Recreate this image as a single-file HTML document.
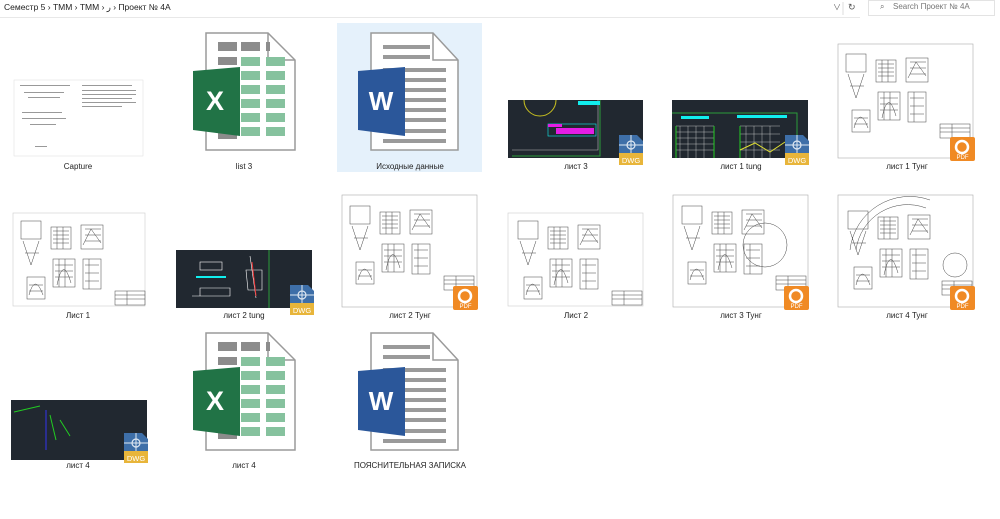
<!DOCTYPE html>
<html><head><meta charset="utf-8"><style>
html,body{margin:0;padding:0;background:#fff;width:1000px;height:519px;overflow:hidden;font-family:"Liberation Sans","Noto Sans CJK SC",sans-serif}
svg{position:absolute;left:0;top:0}
</style></head><body>
<svg width="1000" height="519" viewBox="0 0 1000 519" xmlns="http://www.w3.org/2000/svg" font-family="Liberation Sans, Noto Sans CJK SC, sans-serif">
<defs>
<g id="xl">
 <path d="M13,3 H75 L102,30 V120 H13 Z" fill="#fff" stroke="#9a9a9a" stroke-width="1.5"/>
 <path d="M75,3 V30 H102" fill="none" stroke="#9a9a9a" stroke-width="1.5"/>
 <rect x="25" y="12" width="19" height="9" fill="#8c8c8c"/><rect x="48" y="12" width="19" height="9" fill="#8c8c8c"/><rect x="73" y="12" width="4" height="9" fill="#8c8c8c"/>
 <rect x="25" y="27" width="19" height="8" fill="#8c8c8c"/>
 <g fill="#86c29e">
 <rect x="48" y="27" width="19" height="9"/><rect x="73" y="27" width="19" height="9"/>
 <rect x="48" y="41" width="19" height="9"/><rect x="73" y="41" width="19" height="9"/>
 <rect x="48" y="55" width="19" height="9"/><rect x="73" y="55" width="19" height="9"/>
 <rect x="48" y="69" width="19" height="9"/><rect x="73" y="69" width="19" height="9"/>
 <rect x="48" y="83" width="19" height="9"/><rect x="73" y="83" width="19" height="9"/>
 <rect x="48" y="97" width="19" height="9"/><rect x="73" y="97" width="19" height="9"/>
 </g>
 <rect x="25" y="100" width="19" height="9" fill="#8c8c8c"/>
 <path d="M0,41 L47,37 V106 L0,100 Z" fill="#217346"/>
 <text x="22" y="80" font-size="27" font-weight="bold" fill="#fff" text-anchor="middle">X</text>
</g>
<g id="wd">
 <path d="M13,3 H75 L100,30 V120 H13 Z" fill="#fff" stroke="#9a9a9a" stroke-width="1.5"/>
 <path d="M75,3 V30 H100" fill="none" stroke="#9a9a9a" stroke-width="1.5"/>
 <g fill="#9a9a9a">
 <rect x="25" y="15" width="47" height="4"/><rect x="25" y="25" width="47" height="4"/>
 <rect x="25" y="38" width="63" height="4"/><rect x="25" y="48" width="63" height="4"/><rect x="25" y="58" width="63" height="4"/>
 <rect x="25" y="68" width="63" height="4"/><rect x="25" y="78" width="63" height="4"/><rect x="25" y="88" width="63" height="4"/>
 <rect x="25" y="99" width="63" height="4"/><rect x="25" y="109" width="63" height="4"/>
 </g>
 <path d="M0,41 L47,37 V106 L0,100 Z" fill="#2b579a"/>
 <text x="23" y="80" font-size="26" font-weight="bold" fill="#fff" text-anchor="middle">W</text>
</g>
<g id="dwg">
 <path d="M0,0 H18 L24,6 V30 H0 Z" fill="#3e6fa8"/>
 <rect x="0" y="18" width="24" height="12" fill="#e8b53a"/>
 <circle cx="12" cy="10" r="4" fill="none" stroke="#dfe8f2" stroke-width="1.2"/>
 <path d="M0,10 H24 M12,0 V18" stroke="#dfe8f2" stroke-width="1"/>
 <text x="12" y="28" font-size="7.5" fill="#fff" text-anchor="middle">DWG</text>
</g>
<g id="pdf">
 <rect x="0" y="0" width="25" height="24" rx="2" fill="#f08a24"/>
 <circle cx="12" cy="10" r="6" fill="none" stroke="#fff" stroke-width="2.5"/>
 <text x="12.5" y="22" font-size="6" fill="#fff" text-anchor="middle">PDF</text>
</g>
<g id="draw" stroke="#444" stroke-width="0.5" fill="none">
 <rect x="6" y="6" width="20" height="18"/><path d="M8,26 L16,50 L24,26 M10,38 H24"/>
 <rect x="36" y="12" width="20" height="22"/><path d="M38,16 H54 M38,20 H54 M38,24 H54 M38,28 H54 M42,12 V34 M48,12 V34"/>
 <rect x="66" y="10" width="22" height="24"/><path d="M68,30 L76,14 L86,28 M70,14 H86 M70,20 H86 M70,26 H86"/>
 <rect x="38" y="44" width="22" height="28"/><path d="M40,50 H58 M40,56 H58 M40,62 H58 M44,44 V72 M50,44 V72 M42,70 Q48,40 56,68"/>
 <rect x="12" y="62" width="18" height="22"/><path d="M14,80 Q20,58 28,80 M14,70 H28 M14,76 H28"/>
 <rect x="68" y="44" width="18" height="30"/><path d="M70,50 H84 M70,58 H84 M70,66 H84 M74,44 V74"/>
 <rect x="100" y="76" width="30" height="14"/><path d="M100,80 H130 M100,84 H130 M112,76 V90"/>
</g>
</defs>

<rect x="0" y="0" width="1000" height="18" fill="#fff"/>
<line x1="0" y1="17.5" x2="860" y2="17.5" stroke="#e8e8e8"/>
<text x="4" y="10" font-size="8.5" fill="#222">Семестр 5  ›  ТММ  ›  ТММ  ›      ر  ›  Проект № 4А</text>
<text x="833" y="10" font-size="8" fill="#666">∨</text>
<line x1="843" y1="2" x2="843" y2="15" stroke="#ddd"/>
<text x="848" y="10" font-size="9" fill="#555">↻</text>
<rect x="868.5" y="0.5" width="126" height="15" fill="#fff" stroke="#e3e3e3"/>
<text x="880" y="9" font-size="8" fill="#666">⌕</text>
<text x="893" y="9" font-size="8" fill="#777">Search Проект № 4А</text>

<rect x="337" y="23" width="145" height="149" fill="#e5f1fb"/>

<rect x="14" y="80" width="129" height="76" fill="#fff" stroke="#ddd" stroke-width="0.5"/>
<g fill="#999"><rect x="20" y="85" width="50" height="1"/><rect x="24" y="92" width="40" height="1"/><rect x="28" y="97" width="32" height="1"/><rect x="22" y="112" width="40" height="1"/><rect x="22" y="118" width="44" height="1"/><rect x="30" y="124" width="26" height="1"/><rect x="35" y="146" width="12" height="1"/>
<rect x="82" y="85" width="50" height="1"/><rect x="82" y="90" width="54" height="1"/><rect x="82" y="94" width="54" height="1"/><rect x="82" y="98" width="50" height="1"/><rect x="82" y="102" width="54" height="1"/><rect x="82" y="106" width="40" height="1"/></g>
<text x="78" y="169" font-size="8" fill="#222" text-anchor="middle">Capture</text>

<use href="#xl" x="193" y="30"/>
<text x="244" y="169" font-size="8" fill="#222" text-anchor="middle">list 3</text>
<use href="#wd" x="358" y="30"/>
<text x="410" y="169" font-size="8" fill="#222" text-anchor="middle">Исходные данные</text>

<rect x="508" y="100" width="135" height="58" fill="#212830"/>
<path d="M512,156 H600 V100" stroke="#2a9d3a" fill="none"/><path d="M512,150 H598 V100" stroke="#bbb" fill="none" stroke-width="0.6"/>
<path d="M524,100 A16,16 0 0 0 556,100" stroke="#c8c020" fill="none"/><rect x="578" y="101" width="22" height="4" fill="#1ee"/>
<rect x="548" y="124" width="48" height="12" fill="none" stroke="#1ee" stroke-width="0.6"/><rect x="556" y="128" width="38" height="6" fill="#e41de4"/><rect x="548" y="124" width="14" height="3" fill="#e41de4"/>
<use href="#dwg" x="619" y="135"/>
<text x="576" y="169" font-size="8" fill="#222" text-anchor="middle">лист  3</text>

<rect x="672" y="100" width="136" height="58" fill="#212830"/>
<path d="M672,113 H797 V158" stroke="#2a9d3a" fill="none"/>
<rect x="681" y="116" width="28" height="3" fill="#1ee"/><rect x="737" y="115" width="50" height="3" fill="#1ee"/>
<g stroke="#ddd" stroke-width="0.4"><path d="M676,126 H714 M676,132 H714 M676,138 H714 M676,144 H714 M676,150 H714 M680,126 V158 M688,126 V158 M696,126 V158 M704,126 V158 M740,126 H780 M740,134 H780 M740,142 H780 M740,150 H780 M746,126 V158 M754,126 V158 M762,126 V158 M770,126 V158"/></g>
<path d="M676,126 V158 M714,126 V158 M740,126 V158" stroke="#2c2" />
<path d="M740,150 L755,143 L770,152 L785,142" stroke="#dd3" fill="none"/>
<use href="#dwg" x="785" y="135"/>
<text x="741" y="169" font-size="8" fill="#222" text-anchor="middle">лист 1 tung</text>

<rect x="838" y="44" width="135" height="114" fill="#fff" stroke="#aaa" stroke-width="0.6"/>
<use href="#draw" x="840" y="48"/>
<use href="#pdf" x="950" y="137"/>
<text x="907" y="169" font-size="8" fill="#222" text-anchor="middle">лист 1 Тунг</text>

<rect x="13" y="213" width="132" height="93" fill="#fff" stroke="#ccc" stroke-width="0.6"/>
<use href="#draw" x="15" y="215"/>
<text x="78" y="318" font-size="8" fill="#222" text-anchor="middle">Лист 1</text>

<rect x="176" y="250" width="136" height="58" fill="#212830"/>
<path d="M269,250 V308" stroke="#2a9d3a"/>
<rect x="200" y="262" width="22" height="8" fill="none" stroke="#fff" stroke-width="0.6"/><rect x="196" y="276" width="30" height="2" fill="#1ee"/>
<path d="M192,296 H230 V288 H200 V296" stroke="#fff" fill="none" stroke-width="0.6"/>
<path d="M250,256 L256,298 M246,270 H262 V290 H248 Z" stroke="#fff" fill="none" stroke-width="0.6"/><path d="M252,262 L256,296" stroke="#e33"/>
<use href="#dwg" x="290" y="285"/>
<text x="244" y="318" font-size="8" fill="#222" text-anchor="middle">лист 2 tung</text>

<rect x="342" y="195" width="135" height="112" fill="#fff" stroke="#aaa" stroke-width="0.6"/>
<use href="#draw" x="344" y="200"/>
<use href="#pdf" x="453" y="286"/>
<text x="410" y="318" font-size="8" fill="#222" text-anchor="middle">лист 2 Тунг</text>

<rect x="508" y="213" width="135" height="93" fill="#fff" stroke="#ccc" stroke-width="0.6"/>
<use href="#draw" x="512" y="215"/>
<text x="576" y="318" font-size="8" fill="#222" text-anchor="middle">Лист 2</text>

<rect x="673" y="195" width="135" height="112" fill="#fff" stroke="#aaa" stroke-width="0.6"/>
<use href="#draw" x="676" y="200"/>
<circle cx="765" cy="245" r="22" fill="none" stroke="#444" stroke-width="0.5"/>
<use href="#pdf" x="784" y="286"/>
<text x="741" y="318" font-size="8" fill="#222" text-anchor="middle">лист 3 Тунг</text>

<rect x="838" y="195" width="135" height="112" fill="#fff" stroke="#aaa" stroke-width="0.6"/>
<path d="M850,250 A60,60 0 0 1 930,200 M856,250 A52,52 0 0 1 926,208" stroke="#444" fill="none" stroke-width="0.5"/>
<use href="#draw" x="842" y="205"/>
<circle cx="955" cy="265" r="12" fill="none" stroke="#444" stroke-width="0.5"/>
<use href="#pdf" x="950" y="286"/>
<text x="907" y="318" font-size="8" fill="#222" text-anchor="middle">лист 4 Тунг</text>

<rect x="11" y="400" width="136" height="60" fill="#212830"/>
<path d="M14,412 L40,406" stroke="#2c2"/><path d="M50,415 L56,440 M60,420 L70,436" stroke="#2c2"/><path d="M46,410 V450" stroke="#33e"/>
<use href="#dwg" x="124" y="433"/>
<text x="78" y="468" font-size="8" fill="#222" text-anchor="middle">лист 4</text>

<use href="#xl" x="193" y="330"/>
<text x="244" y="468" font-size="8" fill="#222" text-anchor="middle">лист 4</text>
<use href="#wd" x="358" y="330"/>
<text x="410" y="468" font-size="8" fill="#222" text-anchor="middle">ПОЯСНИТЕЛЬНАЯ ЗАПИСКА</text>
</svg>
</body></html>
